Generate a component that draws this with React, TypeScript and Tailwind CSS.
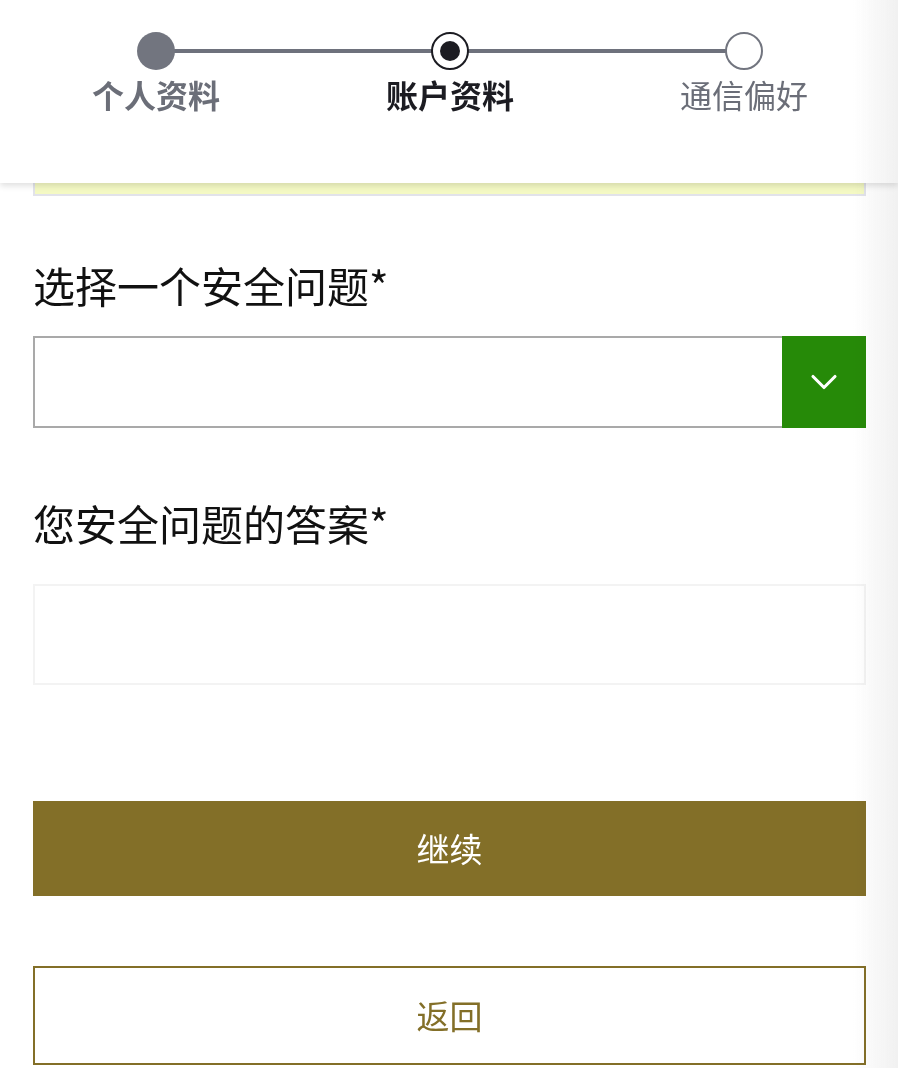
import { ChevronDown } from "lucide-react";

const font = { fontFamily: '"Noto Sans CJK SC", "Noto Sans", sans-serif' };

function Stepper() {
    return (
        <div className="relative ml-[9px] w-[882px] pt-[32px]">
            {/* connecting line */}
            <div className="absolute left-[147px] right-[147px] top-[49px] h-[4px] bg-[#6e717c]" />
            <div className="grid grid-cols-3">
                <div className="flex flex-col items-center">
                    <div className="relative h-[38px] w-[38px] rounded-full bg-[#72757f]" />
                    <span className="mt-[4px] text-[32px] leading-[40px] font-bold text-[#6b6e78]">个人资料</span>
                </div>
                <div className="flex flex-col items-center">
                    <div className="relative flex h-[38px] w-[38px] items-center justify-center rounded-full border-2 border-[#1c1c22] bg-white">
                        <div className="h-[20px] w-[20px] rounded-full bg-[#1c1c22]" />
                    </div>
                    <span className="mt-[4px] text-[32px] leading-[40px] font-bold text-[#1c1c22]">账户资料</span>
                </div>
                <div className="flex flex-col items-center">
                    <div className="relative h-[38px] w-[38px] rounded-full border-2 border-[#72757f] bg-white" />
                    <span className="mt-[4px] text-[32px] leading-[40px] text-[#6b6e78]">通信偏好</span>
                </div>
            </div>
        </div>
    );
}

export default function App() {
    return (
        <div className="relative h-[1068px] overflow-hidden bg-white" style={font}>
            <header className="relative z-10 h-[183px] bg-white shadow-[0_3px_6px_rgba(0,0,0,0.12)]">
                <Stepper />
            </header>

            <main className="pl-[33px] pr-[32px]">
                {/* partially hidden notice strip */}
                <div className="h-[13px] border-x-2 border-b-2 border-[#e2e3ea] bg-[#f4f9c4]" />

                <label className="mt-[59px] block text-[42px] leading-[60px] text-[#111]">选择一个安全问题*</label>
                <div className="mt-[21px] flex h-[92px] border-2 border-[#a9a9a9] bg-white">
                    <div className="flex-1" />
                    <div className="-my-[2px] -mr-[2px] flex w-[84px] items-center justify-center bg-[#268a08]">
                        <ChevronDown className="h-[44px] w-[44px] text-white" strokeWidth={1.7} />
                    </div>
                </div>

                <label className="mt-[65px] block text-[42px] leading-[60px] text-[#111]">您安全问题的答案*</label>
                <div className="mt-[31px] h-[101px] border-2 border-[#f3f3f3] bg-white" />

                <button className="mt-[116px] flex h-[95px] w-full items-center justify-center bg-[#836f28] text-[33px] text-white">
                    继续
                </button>
                <button className="mt-[70px] flex h-[99px] w-full items-center justify-center border-2 border-[#836f28] bg-white text-[33px] text-[#836f28]">
                    返回
                </button>
            </main>

            {/* soft edge at the right side of the viewport */}
            <div className="pointer-events-none absolute right-0 top-0 z-20 h-full w-[45px] bg-gradient-to-r from-transparent to-[#f1f1f1] mix-blend-multiply" />
        </div>
    );
}
